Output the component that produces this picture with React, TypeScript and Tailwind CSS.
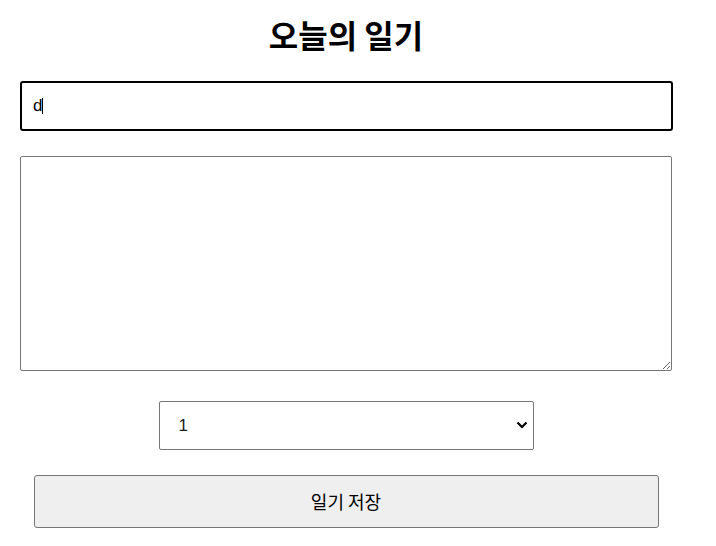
import React from "react";

export default function App() {
  return (
    <div className="w-[716px] h-[546px] bg-white overflow-hidden">
      <div className="w-[652px] ml-[20px] flex flex-col items-center">
        <h1 className="mt-[14px] h-[40px] leading-[40px] text-[32px] font-bold text-black font-['Noto_Sans_CJK_KR','Noto_Sans',sans-serif]">
          오늘의 일기
        </h1>
        <div className="relative self-start mt-[27px] w-[653px] h-[50px]">
          <input
            readOnly
            value="d"
            className="w-full h-full border-2 border-black rounded-[3px] pl-[11px] text-[17px] text-black outline-none font-['Liberation_Sans',Arial,sans-serif]"
          />
          <span className="absolute left-[22px] top-[17px] w-px h-[16px] bg-black pointer-events-none" />
        </div>
        <textarea className="block mt-[25px] w-[652px] h-[215px] border border-[#767676] rounded-[2px] outline-none font-['Liberation_Sans',Arial,sans-serif]" />
        <div className="relative mt-[30px] w-[375px] h-[49px]">
          <select
            defaultValue="1"
            className="appearance-none w-full h-full border border-[#767676] rounded-[2px] bg-white pl-[19px] text-[17px] text-[#1a1a1a] outline-none font-['Liberation_Sans',Arial,sans-serif]"
          >
            <option value="1">1</option>
            <option value="2">2</option>
            <option value="3">3</option>
            <option value="4">4</option>
            <option value="5">5</option>
          </select>
          <svg
            className="absolute right-[6px] top-[20px] pointer-events-none"
            width="12"
            height="8"
            viewBox="0 0 12 8"
          >
            <path d="M1.5 1.5 L6 6 L10.5 1.5" fill="none" stroke="#000" strokeWidth="2.2" />
          </svg>
        </div>
        <button className="mt-[25px] w-[625px] h-[53px] bg-[#efefef] border border-[#767676] rounded-[3px] text-[18px] text-black flex items-center justify-center font-['Noto_Sans_CJK_KR','Noto_Sans',sans-serif]">
          일기 저장
        </button>
      </div>
    </div>
  );
}
